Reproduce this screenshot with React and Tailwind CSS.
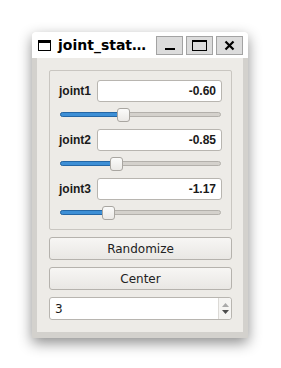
import { useState } from 'react'

const joints = [
  { name: 'joint1', value: '-0.60', pos: 57 },
  { name: 'joint2', value: '-0.85', pos: 50 },
  { name: 'joint3', value: '-1.17', pos: 42 },
]

function TitleButton({ children }) {
  return (
    <div className="w-[27px] h-[19px] flex items-center justify-center bg-[#dcdcdc] border border-[#a3a3a3]">
      {children}
    </div>
  )
}

function Slider({ pos }) {
  return (
    <div className="relative h-[14px] ml-[1px] mr-[1px]">
      <div className="absolute left-0 right-0 top-[4px] h-[5px] rounded-full bg-[#d4d1cc] border border-[#b3b0ab]" />
      <div
        className="absolute left-0 top-[4px] h-[5px] rounded-l-full bg-[#3d8fd6] border border-[#2467a6]"
        style={{ width: pos + 4 }}
      />
      <div
        className="absolute top-0 w-[13px] h-[14px] rounded-[3px] border border-[#a9a6a1] bg-gradient-to-b from-[#fbfbfa] to-[#ebe9e6]"
        style={{ left: pos }}
      />
    </div>
  )
}

export default function App() {
  const [count] = useState('3')

  return (
    <div className="w-[281px] h-[368px] bg-white pl-[32px] pt-[32px] font-['DejaVu_Sans',sans-serif]">
      <div className="w-[216px] rounded-t-[3px] shadow-[0_5px_14px_rgba(0,0,0,0.45)] bg-[#d3d1cd]">
        {/* Title bar */}
        <div className="h-[26px] bg-white rounded-t-[3px] flex items-center pl-[6px] pr-[5px]">
          <div className="w-[13px] h-[11px] border border-black border-t-[3px] mr-[7px]" />
          <span className="text-[14px] font-bold text-black leading-none flex-1">joint_stat…</span>
          <div className="flex gap-[3px]">
            <TitleButton>
              <div className="w-[10px] h-[2px] bg-black mt-[8px]" />
            </TitleButton>
            <TitleButton>
              <div className="w-[15px] h-[11px] border border-black border-t-[2px]" />
            </TitleButton>
            <TitleButton>
              <svg width="11" height="11" viewBox="0 0 11 11">
                <path d="M1.5 1.5 L9.5 9.5 M9.5 1.5 L1.5 9.5" stroke="black" strokeWidth="2.2" />
              </svg>
            </TitleButton>
          </div>
        </div>

        {/* Body */}
        <div className="px-[5px] pb-[6px]">
          <div className="bg-[#edebe7] pt-[12px] pl-[12px] pr-[11px] pb-[12px] flex flex-col gap-[7px]">
            <div className="border border-[#c9c6c1] rounded-[2px] px-[9px] pt-[9px] pb-[9px] flex flex-col gap-[7px]">
              {joints.map((j) => (
                <div key={j.name} className="flex flex-col gap-[6px]">
                  <div className="flex items-center">
                    <span className="w-[38px] font-['Liberation_Sans',Arial,sans-serif] font-bold text-[12px] text-[#1a1a1a]">
                      {j.name}
                    </span>
                    <div className="flex-1 h-[22px] bg-white border border-[#b8b5b0] rounded-[3px] flex items-center justify-end pr-[5px] font-['Liberation_Sans',Arial,sans-serif] font-bold text-[12px] text-[#1a1a1a]">
                      {j.value}
                    </div>
                  </div>
                  <Slider pos={j.pos} />
                </div>
              ))}
            </div>

            <button className="h-[23px] border border-[#b5b2ad] rounded-[3px] bg-gradient-to-b from-[#f7f6f4] to-[#e9e7e4] text-[12px] text-[#222]">
              Randomize
            </button>
            <button className="h-[23px] border border-[#b5b2ad] rounded-[3px] bg-gradient-to-b from-[#f7f6f4] to-[#e9e7e4] text-[12px] text-[#222]">
              Center
            </button>

            <div className="h-[23px] bg-white border border-[#b8b5b0] rounded-[3px] flex items-stretch">
              <span className="flex-1 text-[12px] text-[#1a1a1a] pl-[5px] flex items-center">{count}</span>
              <div className="w-[13px] border-l border-[#dcdad6] bg-[#f5f4f2] flex flex-col items-center justify-center gap-[3px] rounded-r-[3px]">
                <svg width="7" height="4" viewBox="0 0 7 4">
                  <path d="M0 4 L3.5 0 L7 4 Z" fill="#a9a9a9" />
                </svg>
                <svg width="7" height="4" viewBox="0 0 7 4">
                  <path d="M0 0 L3.5 4 L7 0 Z" fill="#4d4d4d" />
                </svg>
              </div>
            </div>
          </div>
        </div>
      </div>
    </div>
  )
}
